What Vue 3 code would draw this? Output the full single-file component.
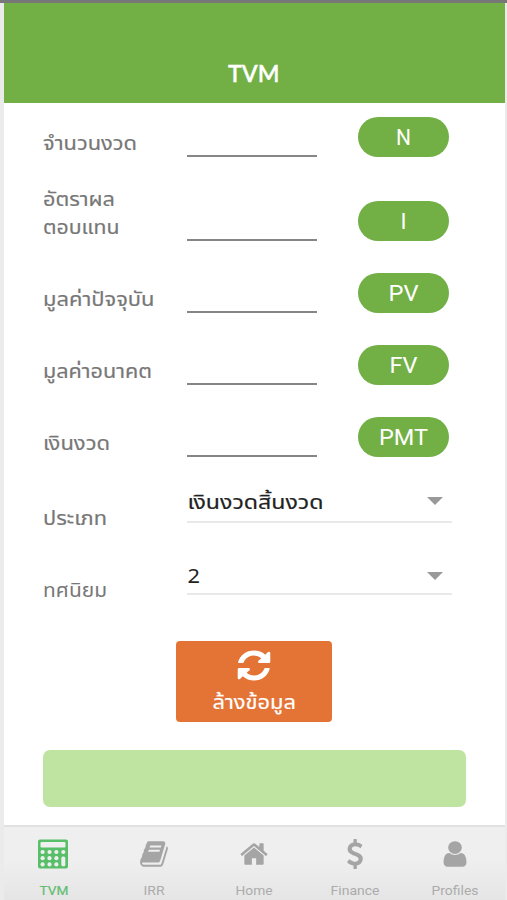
<script setup>
const fields = [
  { label: ['จำนวนงวด'], w: [94], key: 'N', kw: 15 },
  { label: ['อัตราผล', 'ตอบแทน'], w: [72, 76.5], key: 'I', kw: 6, tall: true },
  { label: ['มูลค่าปัจจุบัน'], w: [111.5], key: 'PV', kw: 30 },
  { label: ['มูลค่าอนาคต'], w: [109], key: 'FV', kw: 28 },
  { label: ['เงินงวด'], w: [67], key: 'PMT', kw: 49 },
]
const selects = [
  { label: 'ประเภท', w: 64, value: 'เงินงวดสิ้นงวด', vw: 136, cls: 'first' },
  { label: 'ทศนิยม', w: 64, value: '2', vw: 12.5, cls: 'second' },
]
const tabs = [
  { name: 'TVM', w: 29, icon: 'calc' },
  { name: 'IRR', w: 21, d: 'M1703 478q40 57 18 129l-275 906q-19 64-76.5 107.5t-122.5 43.5h-923q-77 0-148.5-53.5t-99.5-131.5q-24-67-2-127 0-4 3-27t4-37q1-8-3-21.5t-3-19.5q2-11 8-21t16.5-23.5 16.5-23.5q23-38 45-91.5t30-91.5q3-10 .5-30t-.5-28q3-11 17-28t17-23q21-36 42-92t25-90q1-9-2.5-32t.5-28q4-13 22-30.5t22-22.5q19-26 42.5-84.5t27.5-96.5q1-8-3-25.5t-2-26.5q2-8 9-18t18-23 17-21q8-12 16.5-30.5t15-35 16-36 19.5-32 26.5-23.5 36-11.5 47.5 5.5l-1 3q38-9 51-9h761q74 0 114 56t18 130l-274 906q-36 119-71.5 153.5t-128.5 34.5h-869q-27 0-38 15-11 16-1 43 24 70 144 70h923q29 0 56-15.5t35-41.5l300-987q7-22 5-57 38 15 59 43zm-1064 2q-4 13 2 22.5t20 9.5h608q13 0 25.5-9.5t16.5-22.5l21-64q4-13-2-22.5t-20-9.5h-608q-13 0-25.5 9.5t-16.5 22.5zm-83 256q-4 13 2 22.5t20 9.5h608q13 0 25.5-9.5t16.5-22.5l21-64q4-13-2-22.5t-20-9.5h-608q-13 0-25.5 9.5t-16.5 22.5z' },
  { name: 'Home', w: 37, d: 'M1472 992v480q0 26-19 45t-45 19h-384v-384h-256v384h-384q-26 0-45-19t-19-45v-480q0-1 .5-3t.5-3l575-474 575 474q1 2 1 6zm223-69l-62 74q-8 9-21 11h-3q-13 0-21-7l-692-577-692 577q-12 8-24 7-13-2-21-11l-62-74q-8-10-7-23.5t11-21.5l719-599q32-26 76-26t76 26l244 204v-195q0-14 9-23t23-9h192q14 0 23 9t9 23v408l219 182q10 8 11 21.5t-7 23.5z' },
  { name: 'Finance', w: 49, d: 'M1362 1185q0 153-99.5 263.5t-258.5 136.5v175q0 14-9 23t-23 9h-135q-13 0-22.5-9.5t-9.5-22.5v-175q-66-9-127.5-31t-101.5-44.5-74-48-46.5-37.5-17.5-18q-17-21-2-41l103-135q7-10 23-12 15-2 24 9l2 2q113 99 243 125 37 8 74 8 81 0 142.5-43t61.5-122q0-28-15-53t-33.5-42-58.5-37.5-66-32-80-32.5q-39-16-61.5-25t-61.5-26.5-62.5-31-56.5-35.5-53.5-42.5-43.5-49-35.5-58-21-66.5-8.5-78q0-138 98-242t255-134v-180q0-13 9.5-22.5t22.5-9.5h135q14 0 23 9t9 23v176q57 6 110.5 23t87 33.5 63.5 37.5 39 29 15 14q17 18 5 38l-81 146q-8 15-23 16-14 3-27-7-3-3-14.5-12t-39-26.5-58.5-32-74.5-26-85.5-11.5q-95 0-155 43t-60 111q0 26 8.5 48t29.5 41.5 39.5 33 56 31 60.5 27 70 27.5q53 20 81 31.5t76 35 75.5 42.5 62 50 53 63.5 31.5 76.5 13 94z' },
  { name: 'Profiles', w: 47, wide: true, d: 'M1536 1399q0 109-62.5 187t-150.5 78h-854q-88 0-150.5-78t-62.5-187q0-85 8.500-160.500t31.500-152 58.500-131 94-89 134.500-34.500q131 128 313 128t313-128q76 0 134.500 34.500t94 89 58.500 131 31.500 152 8.500 160.500zm-256-887q0 159-112.500 271.500t-271.500 112.500-271.500-112.500-112.500-271.500 112.500-271.500 271.500-112.500 271.500 112.500 112.500 271.500z' },
]
</script>

<template>
  <div class="screen">
    <header class="bar">
      <svg class="title" width="60" height="30"><text x="4" y="22" textLength="51.5" lengthAdjust="spacingAndGlyphs">TVM</text></svg>
    </header>
    <main class="form">
      <div v-for="f in fields" :key="f.key" class="row" :class="{ tall: f.tall }">
        <div class="label">
          <svg v-for="(l, i) in f.label" :key="l" class="thai" width="140" height="28"><text x="0" y="21.300" :textLength="f.w[i]" lengthAdjust="spacingAndGlyphs">{{ l }}</text></svg>
        </div>
        <div class="input"></div>
        <button class="pill">
          <svg width="91" height="40"><text :x="45.5 - f.kw / 2" y="27.800" :textLength="f.kw" lengthAdjust="spacingAndGlyphs">{{ f.key }}</text></svg>
        </button>
      </div>
      <div v-for="s in selects" :key="s.label" class="row" :class="['choice', s.cls]">
        <div class="label">
          <svg class="thai" width="140" height="28"><text x="0" y="21" :textLength="s.w" lengthAdjust="spacingAndGlyphs">{{ s.label }}</text></svg>
        </div>
        <div class="select">
          <svg class="thai" width="200" height="34"><text x="0.5" y="23" :textLength="s.vw" lengthAdjust="spacingAndGlyphs">{{ s.value }}</text></svg>
          <svg class="caret" width="16" height="8" viewBox="0 0 16 8"><path d="M0 0H16L8 8Z" /></svg>
        </div>
      </div>
      <button class="clear">
        <svg class="refresh" width="38" height="35" viewBox="0 0 1792 1792" preserveAspectRatio="none"><path d="M1639 1056q0 5-1 7-64 268-268 434.5t-478 166.5q-146 0-282.5-55t-243.5-157l-129 129q-19 19-45 19t-45-19-19-45v-448q0-26 19-45t45-19h448q26 0 45 19t19 45-19 45l-137 137q71 66 161 102t187 36q134 0 250-65t186-179q11-17 53-117 8-23 30-23h192q13 0 22.5 9.5t9.5 22.5zm25-800v448q0 26-19 45t-45 19h-448q-26 0-45-19t-19-45 19-45l138-138q-148-137-349-137-134 0-250 65t-186 179q-11 17-53 117-8 23-30 23h-199q-13 0-22.5-9.5t-9.5-22.5v-7q65-268 270-434.5t480-166.5q146 0 284 55.5t245 156.5l130-129q19-19 45-19t45 19 19 45z" /></svg>
        <svg class="thai" width="156" height="36"><text x="36.5" y="23" textLength="83.5" lengthAdjust="spacingAndGlyphs">ล้างข้อมูล</text></svg>
      </button>
      <div class="result"></div>
    </main>
    <nav class="tabs">
      <div v-for="t in tabs" :key="t.name" class="tab" :class="{ on: t.icon }">
        <svg v-if="t.icon" width="30" height="30" viewBox="0 0 30 30">
          <path fill-rule="evenodd" d="M2 0.5H28Q30 .5 30 2.5V27.500Q30 29.500 28 29.500H2Q0 29.500 0 27.500V2.500Q0 .5 2 .5ZM3.500 3Q2.500 3 2.500 4V7.500Q2.500 8.500 3.500 8.500H26.500Q27.500 8.500 27.500 7.500V4Q27.500 3 26.500 3Z" />
          <g class="hole">
            <circle v-for="n in 12" :key="n" :cx="4.6 + ((n - 1) % 4) * 6.9" :cy="13 + Math.floor((n - 1) / 4) * 6.2" :r="n === 8 || n === 12 ? 0 : 2.1" />
            <rect x="23.300" y="17.500" width="4" height="9.800" rx="1.500" />
          </g>
        </svg>
        <svg v-else :width="t.wide ? 32 : 30" height="30" viewBox="0 0 1792 1792" preserveAspectRatio="none"><path :d="t.d" /></svg>
        <svg class="name" width="70" height="18"><text :x="35 - t.w / 2" y="13" :textLength="t.w" lengthAdjust="spacingAndGlyphs">{{ t.name }}</text></svg>
      </div>
    </nav>
  </div>
</template>

<style>
body { background: #ebebeb; }
</style>

<style scoped>
* { box-sizing: border-box; }
svg { display: block; flex: none; overflow: visible; }
button { border: 0; padding: 0; margin: 0; }
.screen {
  height: 900px;
  border-top: 3px solid #777;
  padding: 0 2px 0 4px;
  display: flex;
  flex-direction: column;
  overflow: hidden;
  font-family: Roboto, "Liberation Sans", sans-serif;
}
.bar { height: 100px; background: #72b046; display: flex; justify-content: center; align-items: flex-end; padding: 0 2px 13px 0; }
.title text { font: 600 22px Lato, sans-serif; fill: #fff; stroke: #fff; stroke-width: 0.300px; }
.form { height: 722px; background: #fff; padding: 14px 0 0 39px; }
.row { display: grid; grid-template-columns: 144px 130px 91px; height: 72.2px; align-items: end; }
.row:first-child { height: 40px; }
.row.tall { height: 83.600px; }
.row .pill { margin-left: 41px; }
.thai text { font: 20px "Noto Sans Thai", Roboto, "Noto Sans", sans-serif; fill: #777; stroke: #777; stroke-width: 0.200px; }
.input { height: 40px; border-bottom: 2px solid #868686; }
.pill { width: 91px; height: 40px; border-radius: 20px; background: #72b046; }
.pill text { font: 21.500px Roboto, sans-serif; fill: #fff; }
.choice { grid-template-columns: 144px 265px; }
.choice.first { height: 75px; }
.select { display: flex; justify-content: space-between; height: 42px; margin-bottom: 9px; border-bottom: 2px solid #e9e9e9; padding: 5px 9px 0 0; }
.select .thai text { fill: #222; stroke: #222; }
.second .select { height: 40px; }
.second .thai text { stroke-width: 0; }
.caret { margin-top: 11px; fill: #999; }
.second .caret { margin-top: 12px; }
.clear { display: flex; flex-direction: column; align-items: center; width: 156px; height: 81px; margin: 37px 0 27.500px 133px; border-radius: 4px; background: #e47435; padding-top: 7px; }
.refresh { fill: #fff; }
.clear .thai { margin-top: 2.500px; }
.clear .thai text { fill: #fff; stroke: #fff; }
.result { width: 423px; height: 57px; border-radius: 7px; background: #bfe4a2; }
.tabs { height: 75px; border-top: 2px solid #e1e1e1; background: linear-gradient(#efefef 45%, #e5e5e5); display: grid; grid-template-columns: repeat(5, 100.300px); }
.tab { display: flex; flex-direction: column; align-items: center; padding: 12px 1px 0 0; fill: #a5a5a5; }
.tab.on { padding-right: 3px; }
.name { margin-top: 12.500px; }
.name text { font: 13.500px Roboto, sans-serif; fill: #acacac; }
.on { fill: #56bf68; }
.on .name text { fill: #62bd70; stroke: #62bd70; stroke-width: 0.200px; }
.on .name { margin-left: 2px; }
.hole { fill: #efefef; }
</style>
